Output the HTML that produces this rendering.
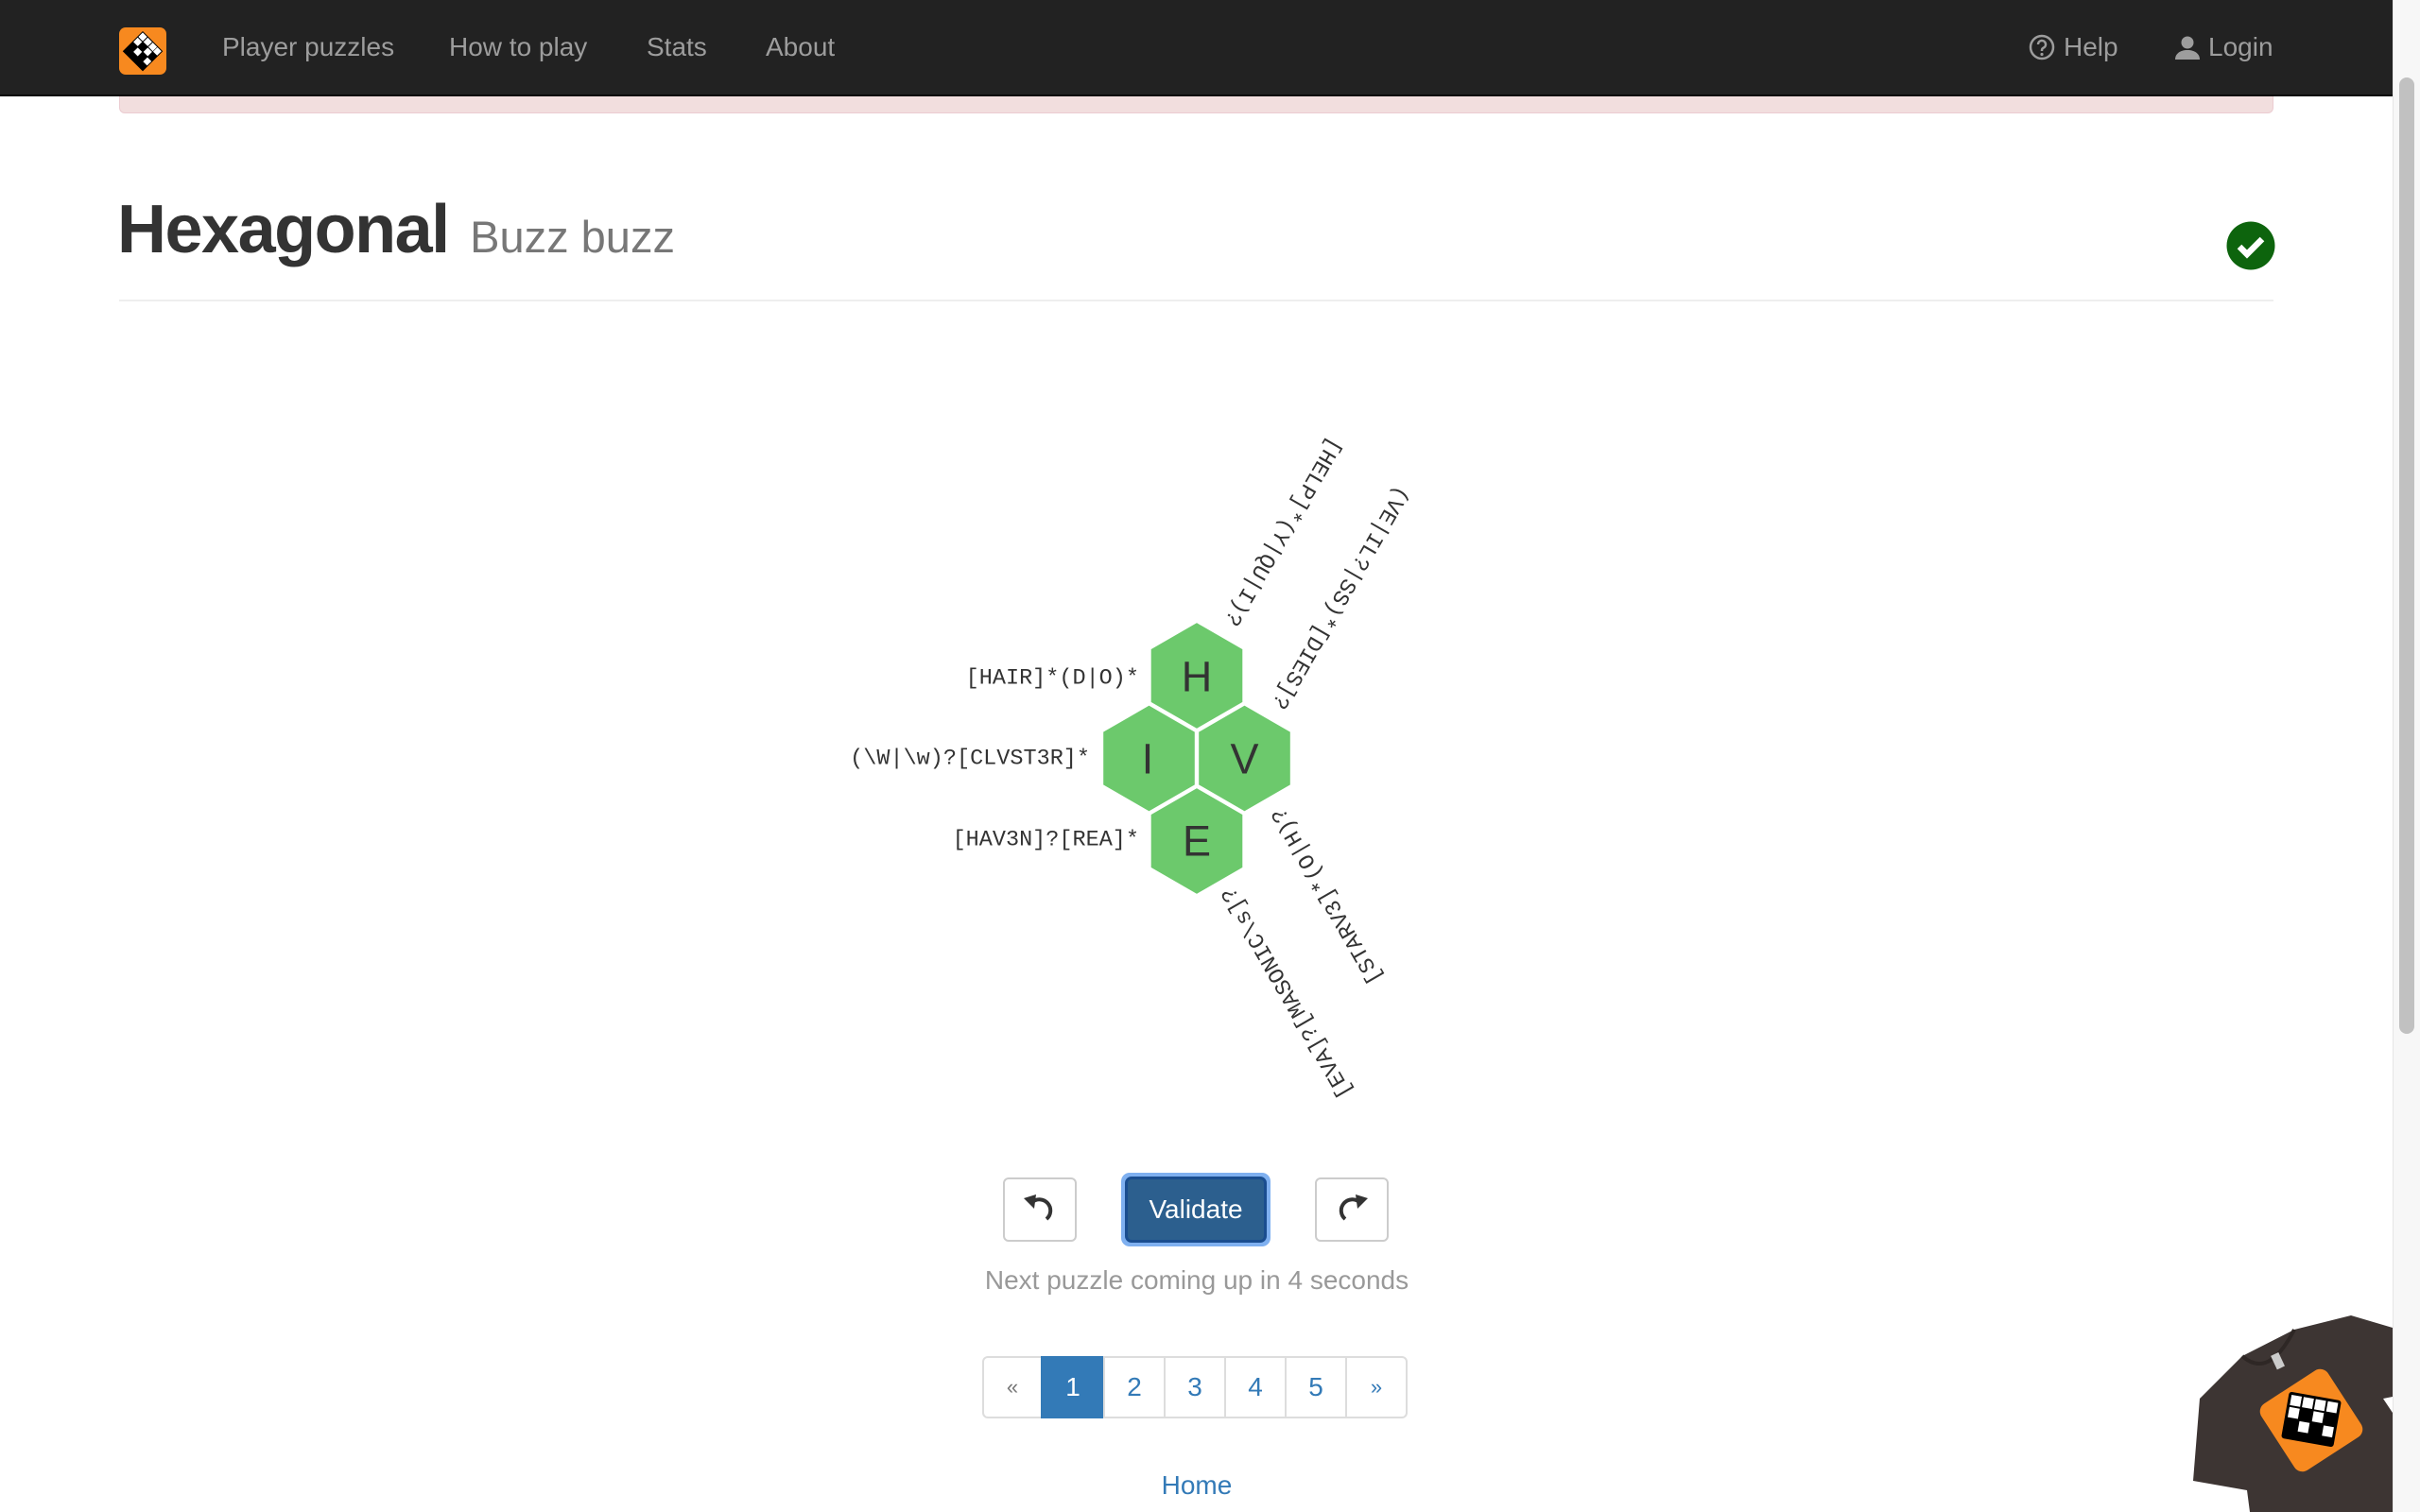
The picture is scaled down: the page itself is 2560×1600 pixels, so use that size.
<!DOCTYPE html>
<html><head><meta charset="utf-8">
<style>
html,body{margin:0;padding:0;width:2560px;height:1600px;overflow:hidden;background:#fff;font-family:"Liberation Sans",Arial,sans-serif;}
.abs{position:absolute;}
.nav{left:0;top:0;width:2531px;height:100px;background:#222;border-bottom:2px solid #080808;}
.navt{color:#9d9d9d;font-size:28px;top:34px;line-height:32px;white-space:nowrap;}
.alert{left:126px;top:102px;width:2277px;height:17px;background:#f2dede;border:1px solid #ebccd1;border-top:none;border-radius:0 0 6px 6px;}
.btn{border:2px solid #ccc;border-radius:6px;background:#fff;box-sizing:border-box;}
.pg{top:1435px;height:66px;box-sizing:border-box;border:2px solid #ddd;margin-left:-2px;font-size:28px;line-height:62px;text-align:center;color:#337ab7;background:#fff;}
</style></head><body>
<div class="abs nav"></div>
<svg class="abs" style="left:126px;top:29px" width="50" height="50" viewBox="0 0 50 50">
<rect width="50" height="50" rx="7" fill="#f7891f"/>
<g transform="translate(25,4) rotate(45)">
<rect x="0" y="0" width="30" height="30" fill="#000"/>
<rect x="1" y="1" width="6.5" height="6.5" fill="#fff"/><rect x="8.5" y="1" width="6.5" height="6.5" fill="#fff"/><rect x="16" y="1" width="6.5" height="6.5" fill="#fff"/><rect x="23" y="1" width="6" height="6.5" fill="#fff"/>
<rect x="1" y="8.5" width="6.5" height="6.5" fill="#fff"/><rect x="16" y="8.5" width="6.5" height="6.5" fill="#fff"/>
<rect x="8.5" y="16" width="6.5" height="6.5" fill="#fff"/><rect x="23" y="16" width="6" height="6.5" fill="#fff"/>
</g></svg>
<div class="abs navt" style="left:235px">Player puzzles</div>
<div class="abs navt" style="left:475px">How to play</div>
<div class="abs navt" style="left:684px">Stats</div>
<div class="abs navt" style="left:810px">About</div>
<svg class="abs" style="left:2146px;top:36px" width="28" height="28" viewBox="0 0 28 28"><circle cx="14" cy="14" r="12" fill="none" stroke="#9d9d9d" stroke-width="2.5"/><path d="M10 11a4 4 0 1 1 5.5 3.7c-1 .5-1.5 1.2-1.5 2.3v1" fill="none" stroke="#9d9d9d" stroke-width="2.5"/><circle cx="14" cy="21.5" r="1.6" fill="#9d9d9d"/></svg>
<div class="abs navt" style="left:2183px">Help</div>
<svg class="abs" style="left:2301px;top:37px" width="26" height="26" viewBox="0 0 26 26"><circle cx="13" cy="8" r="6.5" fill="#9d9d9d"/><path d="M0 26c0-6 5-10 13-10s13 4 13 10z" fill="#9d9d9d"/></svg>
<div class="abs navt" style="left:2336px">Login</div>
<div class="abs alert"></div>
<div class="abs" style="left:2531px;top:0;width:29px;height:1600px;background:#f7f7f7;border-left:1px solid #e6e6e6;box-sizing:border-box"></div>
<div class="abs" style="left:2538px;top:82px;width:16px;height:1012px;background:#c1c1c1;border-radius:8px"></div>

<div class="abs" style="left:124px;top:198px;font-size:72px;line-height:90px;color:#333;white-space:nowrap;font-weight:bold;letter-spacing:-1.5px">Hexagonal <span style="font-size:47px;color:#777;font-weight:normal;letter-spacing:0;margin-left:4px">Buzz buzz</span></div>
<svg class="abs" style="left:2355px;top:234px" width="52" height="52" viewBox="0 0 52 52"><circle cx="26" cy="26" r="25.5" fill="#0d640d"/><path d="M14 27l8 8 16-16" fill="none" stroke="#fff" stroke-width="6.5"/></svg>
<div class="abs" style="left:126px;top:317px;width:2279px;height:2px;background:#eee"></div>

<svg class="abs" style="left:0;top:0" width="2531" height="1600">
<g fill="#6cc96c" stroke="#fff" stroke-width="3">
<polygon points="1266,657.5 1315.8,686.25 1315.8,743.75 1266,772.5 1216.2,743.75 1216.2,686.25"/>
<polygon points="1215.5,745 1265.3,773.75 1265.3,831.25 1215.5,860 1165.7,831.25 1165.7,773.75"/>
<polygon points="1316.5,745 1366.3,773.75 1366.3,831.25 1316.5,860 1266.7,831.25 1266.7,773.75"/>
<polygon points="1266,832.5 1315.8,861.25 1315.8,918.75 1266,947.5 1216.2,918.75 1216.2,861.25"/>
</g>
<g font-family="Liberation Sans, Arial, sans-serif" font-size="45" fill="#333" text-anchor="middle" dominant-baseline="central">
<text x="1266" y="716">H</text><text x="1214" y="803">I</text><text x="1316.5" y="803">V</text><text x="1266" y="890">E</text>
</g>
<g font-family="Liberation Mono, DejaVu Sans Mono, monospace" font-size="23.5" fill="#333" text-anchor="end" dominant-baseline="central">
<text x="1205" y="718">[HAIR]*(D|O)*</text>
<text x="1153" y="803">(\W|\w)?[CLVST3R]*</text>
<text x="1205" y="889">[HAV3N]?[REA]*</text>
<text transform="translate(1300,660) rotate(120)">[HELP]*(Y|QU|I)?</text>
<text transform="translate(1350,748) rotate(120)">(VE|IL?|SS)*[DIES]?</text>
<text transform="translate(1352,856) rotate(-120)">[STARV3]*(O|H)?</text>
<text transform="translate(1299,940) rotate(-120)">[EVA]?[MASONIC\s]?</text>
</g>
</svg>

<div class="abs btn" style="left:1061px;top:1246px;width:78px;height:68px"></div>
<svg class="abs" style="left:1080px;top:1262px" width="40" height="36" viewBox="0 0 40 36"><path d="M12 10 A11 11 0 1 1 27 28" fill="none" stroke="#333" stroke-width="4"/><polygon points="3,6 16,2 14,17" fill="#333"/></svg>
<div class="abs" style="left:1186px;top:1241px;width:158px;height:78px;border-radius:9px;background:#7fb0f0"></div>
<div class="abs" style="left:1190px;top:1245px;width:150px;height:70px;box-sizing:border-box;border:3px solid #1a4d8f;border-radius:7px;background:#2c5f8e;color:#fff;font-size:28px;line-height:64px;text-align:center">Validate</div>
<div class="abs btn" style="left:1391px;top:1246px;width:78px;height:68px"></div>
<svg class="abs" style="left:1410px;top:1262px" width="40" height="36" viewBox="0 0 40 36"><path d="M28 10 A11 11 0 1 0 13 28" fill="none" stroke="#333" stroke-width="4"/><polygon points="37,6 24,2 26,17" fill="#333"/></svg>
<div class="abs" style="left:900px;top:1338px;width:732px;text-align:center;font-size:28px;line-height:34px;color:#999">Next puzzle coming up in 4 seconds</div>

<div class="abs pg" style="left:1039px;width:64px;border-radius:6px 0 0 6px;margin-left:0;color:#777;font-size:22px">«</div>
<div class="abs pg" style="left:1101px;width:68px;background:#337ab7;border-color:#337ab7;color:#fff;margin-left:0">1</div>
<div class="abs pg" style="left:1169px;width:66px">2</div>
<div class="abs pg" style="left:1233px;width:66px">3</div>
<div class="abs pg" style="left:1297px;width:66px">4</div>
<div class="abs pg" style="left:1361px;width:66px">5</div>
<div class="abs pg" style="left:1425px;width:66px;border-radius:0 6px 6px 0;font-size:22px">»</div>
<div class="abs" style="left:1166px;top:1555px;width:200px;text-align:center;font-size:28px;line-height:34px;color:#337ab7">Home</div>

<svg class="abs" style="left:2300px;top:1360px" width="231" height="240" viewBox="0 0 231 240">
<path d="M72 75 L127 47 L187 32 L231 45 L231 240 L80 240 L77 217 L20 207 L27 120 Z" fill="#3d3533"/>
<path d="M72 75 Q100 100 127 47" fill="none" stroke="#2e2725" stroke-width="4"/>
<rect x="105" y="72" width="9" height="16" fill="#ccc" transform="rotate(-25 110 80)"/>
<path d="M221 120 L231 118 L231 135 Z" fill="#fff"/>
<rect x="-42" y="-42" width="84" height="84" rx="10" fill="#f7891f" transform="translate(145,143) rotate(-33)"/>
<g transform="translate(145,142) rotate(10)">
<rect x="-28" y="-25" width="56" height="50" rx="3" fill="#000"/>
<rect x="-25" y="-22" width="11" height="11" fill="#fff"/><rect x="-12" y="-22" width="11" height="11" fill="#fff"/><rect x="1" y="-22" width="11" height="11" fill="#fff"/><rect x="14" y="-22" width="11" height="11" fill="#fff"/>
<rect x="-25" y="-9" width="11" height="11" fill="#fff"/><rect x="1" y="-9" width="11" height="11" fill="#fff"/>
<rect x="-12" y="4" width="11" height="11" fill="#fff"/><rect x="14" y="4" width="11" height="11" fill="#fff"/>
</g>
</svg>
</body></html>
